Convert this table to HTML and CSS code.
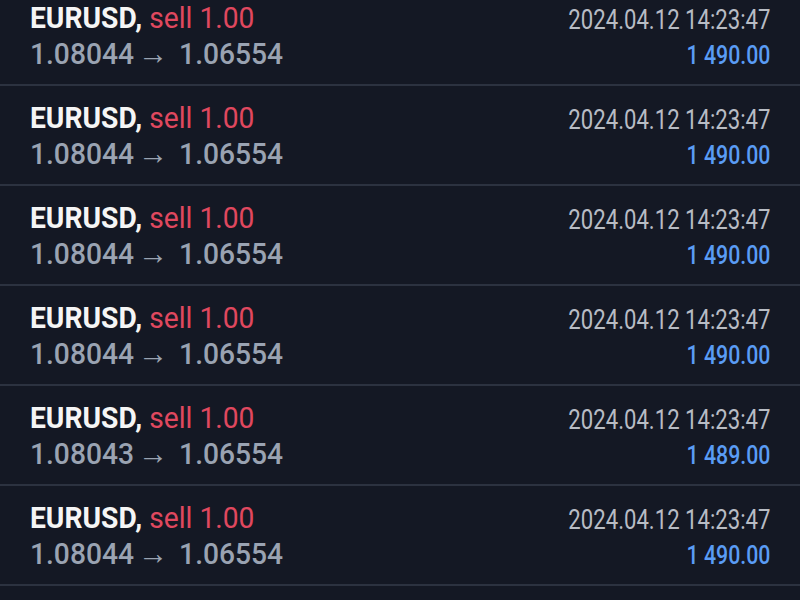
FILE: index.html
```html
<!DOCTYPE html>
<html>
<head>
    <title>History</title>
    <link rel="stylesheet" href="styles.css">
</head>
<body>
<div class="deals">
    <div class="deal">
        <div class="deal-left">
            <div class="deal-title"><span class="symbol">EURUSD,</span> <span class="side">sell 1.00</span></div>
            <div class="deal-prices">1.08044<span class="arrow">&rarr;</span>1.06554</div>
        </div>
        <div class="deal-right">
            <div class="deal-time">2024.04.12 14:23:47</div>
            <div class="deal-profit">1 490.00</div>
        </div>
    </div>
    <div class="deal">
        <div class="deal-left">
            <div class="deal-title"><span class="symbol">EURUSD,</span> <span class="side">sell 1.00</span></div>
            <div class="deal-prices">1.08044<span class="arrow">&rarr;</span>1.06554</div>
        </div>
        <div class="deal-right">
            <div class="deal-time">2024.04.12 14:23:47</div>
            <div class="deal-profit">1 490.00</div>
        </div>
    </div>
    <div class="deal">
        <div class="deal-left">
            <div class="deal-title"><span class="symbol">EURUSD,</span> <span class="side">sell 1.00</span></div>
            <div class="deal-prices">1.08044<span class="arrow">&rarr;</span>1.06554</div>
        </div>
        <div class="deal-right">
            <div class="deal-time">2024.04.12 14:23:47</div>
            <div class="deal-profit">1 490.00</div>
        </div>
    </div>
    <div class="deal">
        <div class="deal-left">
            <div class="deal-title"><span class="symbol">EURUSD,</span> <span class="side">sell 1.00</span></div>
            <div class="deal-prices">1.08044<span class="arrow">&rarr;</span>1.06554</div>
        </div>
        <div class="deal-right">
            <div class="deal-time">2024.04.12 14:23:47</div>
            <div class="deal-profit">1 490.00</div>
        </div>
    </div>
    <div class="deal">
        <div class="deal-left">
            <div class="deal-title"><span class="symbol">EURUSD,</span> <span class="side">sell 1.00</span></div>
            <div class="deal-prices">1.08043<span class="arrow">&rarr;</span>1.06554</div>
        </div>
        <div class="deal-right">
            <div class="deal-time">2024.04.12 14:23:47</div>
            <div class="deal-profit">1 489.00</div>
        </div>
    </div>
    <div class="deal">
        <div class="deal-left">
            <div class="deal-title"><span class="symbol">EURUSD,</span> <span class="side">sell 1.00</span></div>
            <div class="deal-prices">1.08044<span class="arrow">&rarr;</span>1.06554</div>
        </div>
        <div class="deal-right">
            <div class="deal-time">2024.04.12 14:23:47</div>
            <div class="deal-profit">1 490.00</div>
        </div>
    </div>
</div>
</body>
</html>
```

FILE: styles.css
```css
body {
    background-color: #141824;
    font-family: 'Roboto', 'Liberation Sans', sans-serif;
    margin: 0;
    overflow: hidden;
}
.deals {
    margin-top: -14px;
}
.deal {
    display: flex;
    justify-content: space-between;
    align-items: flex-start;
    height: 98px;
    padding: 0 30px;
    border-bottom: 2px solid #2c3240;
}
.deal-left {
    padding-top: 14px;
}
.deal-title,
.deal-prices {
    font-size: 30px;
    line-height: 36px;
    white-space: nowrap;
    transform: scaleX(0.94);
    transform-origin: left center;
}
.symbol {
    color: #f5f5f5;
    font-weight: bold;
}
.side {
    color: #e0485f;
}
.deal-prices {
    color: #9aa3b2;
    font-weight: 500;
}
.arrow {
    display: inline-block;
    font-size: 32px;
    line-height: 20px;
    font-weight: 500;
    margin: 0 12px 0 4px;
}
.deal-right {
    padding-top: 17px;
    text-align: right;
}
.deal-time,
.deal-profit {
    line-height: 35px;
    white-space: nowrap;
    transform: scaleX(0.82);
    transform-origin: right center;
}
.deal-time {
    color: #b8bcc4;
    font-size: 27px;
}
.deal-profit {
    color: #5a9cf5;
    font-size: 26px;
    font-weight: 500;
}
```
